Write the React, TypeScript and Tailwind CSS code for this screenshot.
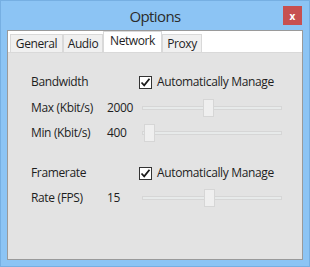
import React from 'react';

const font = { fontFamily: '"Open Sans", "Noto Sans", Arial, sans-serif' };

const Checkbox: React.FC = () => (
  <div className="w-[13px] h-[13px] border border-[#333333] bg-white flex items-center justify-center">
    <svg width="11" height="11" viewBox="0 0 11 11">
      <path d="M1.5 5.5 L4.2 8.3 L9.5 1.8" fill="none" stroke="#1a1a1a" strokeWidth="1.8" />
    </svg>
  </div>
);

interface SliderProps {
  pos: number;
}

const Slider: React.FC<SliderProps> = ({ pos }) => (
  <div className="relative w-[140px] h-[18px] flex items-center">
    <div className="w-full h-[4px] bg-[#e7eaea] border border-[#d6d6d6]" />
    <div
      className="absolute top-0 w-[11px] h-[18px] bg-[#efefef] border border-[#d6d6d6]"
      style={{ left: pos }}
    />
  </div>
);

const tabs = [
  { label: 'General', w: 'w-[53px]' },
  { label: 'Audio', w: 'w-[40px]' },
  { label: 'Network', w: 'w-[59px]' },
  { label: 'Proxy', w: 'w-[40px]' },
];

export default function App() {
  return (
    <div
      className="w-[310px] h-[267px] bg-[#8cc4f4] border border-[#76afe2] flex flex-col text-[#1e1e1e] overflow-hidden"
      style={font}
    >
      <div className="relative h-[29px] flex items-center justify-center">
        <span className="text-[15px] tracking-[-0.6px] text-[#2b2b2b] mt-[1px]">Options</span>
        <div className="absolute right-[7px] top-[5px] w-[19px] h-[19px] bg-[#c75050] flex items-center justify-center text-white text-[10px] font-bold leading-none">
          x
        </div>
      </div>

      <div className="flex-1 mx-[6px] mb-[6px] flex flex-col border border-[#9a9a9a] bg-white">
        <div className="h-[21px] flex items-end pl-[2px] text-[12px] tracking-[-0.4px]">
          {tabs.map((t) => {
            const active = t.label === 'Network';
            return (
              <div
                key={t.label}
                className={
                  active
                    ? `${t.w} h-[21px] bg-white border-x border-t border-[#d9d9d9] flex justify-center items-start`
                    : `${t.w} h-[18px] bg-[#f0f0f0] border-l border-t border-r border-[#d9d9d9] flex justify-center items-center`
                }
              >
                {t.label}
              </div>
            );
          })}
        </div>

        <div className="flex-1 bg-[#e3e3e3] border-t border-[#d9d9d9] pl-[23px] pt-[19px] text-[12px] tracking-[-0.35px]">
          <div className="h-[20px] flex items-center">
            <span className="w-[108px]">Bandwidth</span>
            <Checkbox />
            <span className="ml-[5px]">Automatically Manage</span>
          </div>
          <div className="h-[18px] mt-[7px] flex items-center">
            <span className="w-[76px]">Max (Kbit/s)</span>
            <span className="w-[35px]">2000</span>
            <Slider pos={61} />
          </div>
          <div className="h-[19px] mt-[6px] flex items-center">
            <span className="w-[76px]">Min (Kbit/s)</span>
            <span className="w-[35px]">400</span>
            <Slider pos={2} />
          </div>
          <div className="h-[20px] mt-[21px] flex items-center">
            <span className="w-[108px]">Framerate</span>
            <Checkbox />
            <span className="ml-[5px]">Automatically Manage</span>
          </div>
          <div className="h-[18px] mt-[6px] flex items-center">
            <span className="w-[76px]">Rate (FPS)</span>
            <span className="w-[35px]">15</span>
            <Slider pos={62} />
          </div>
        </div>
      </div>
    </div>
  );
}
